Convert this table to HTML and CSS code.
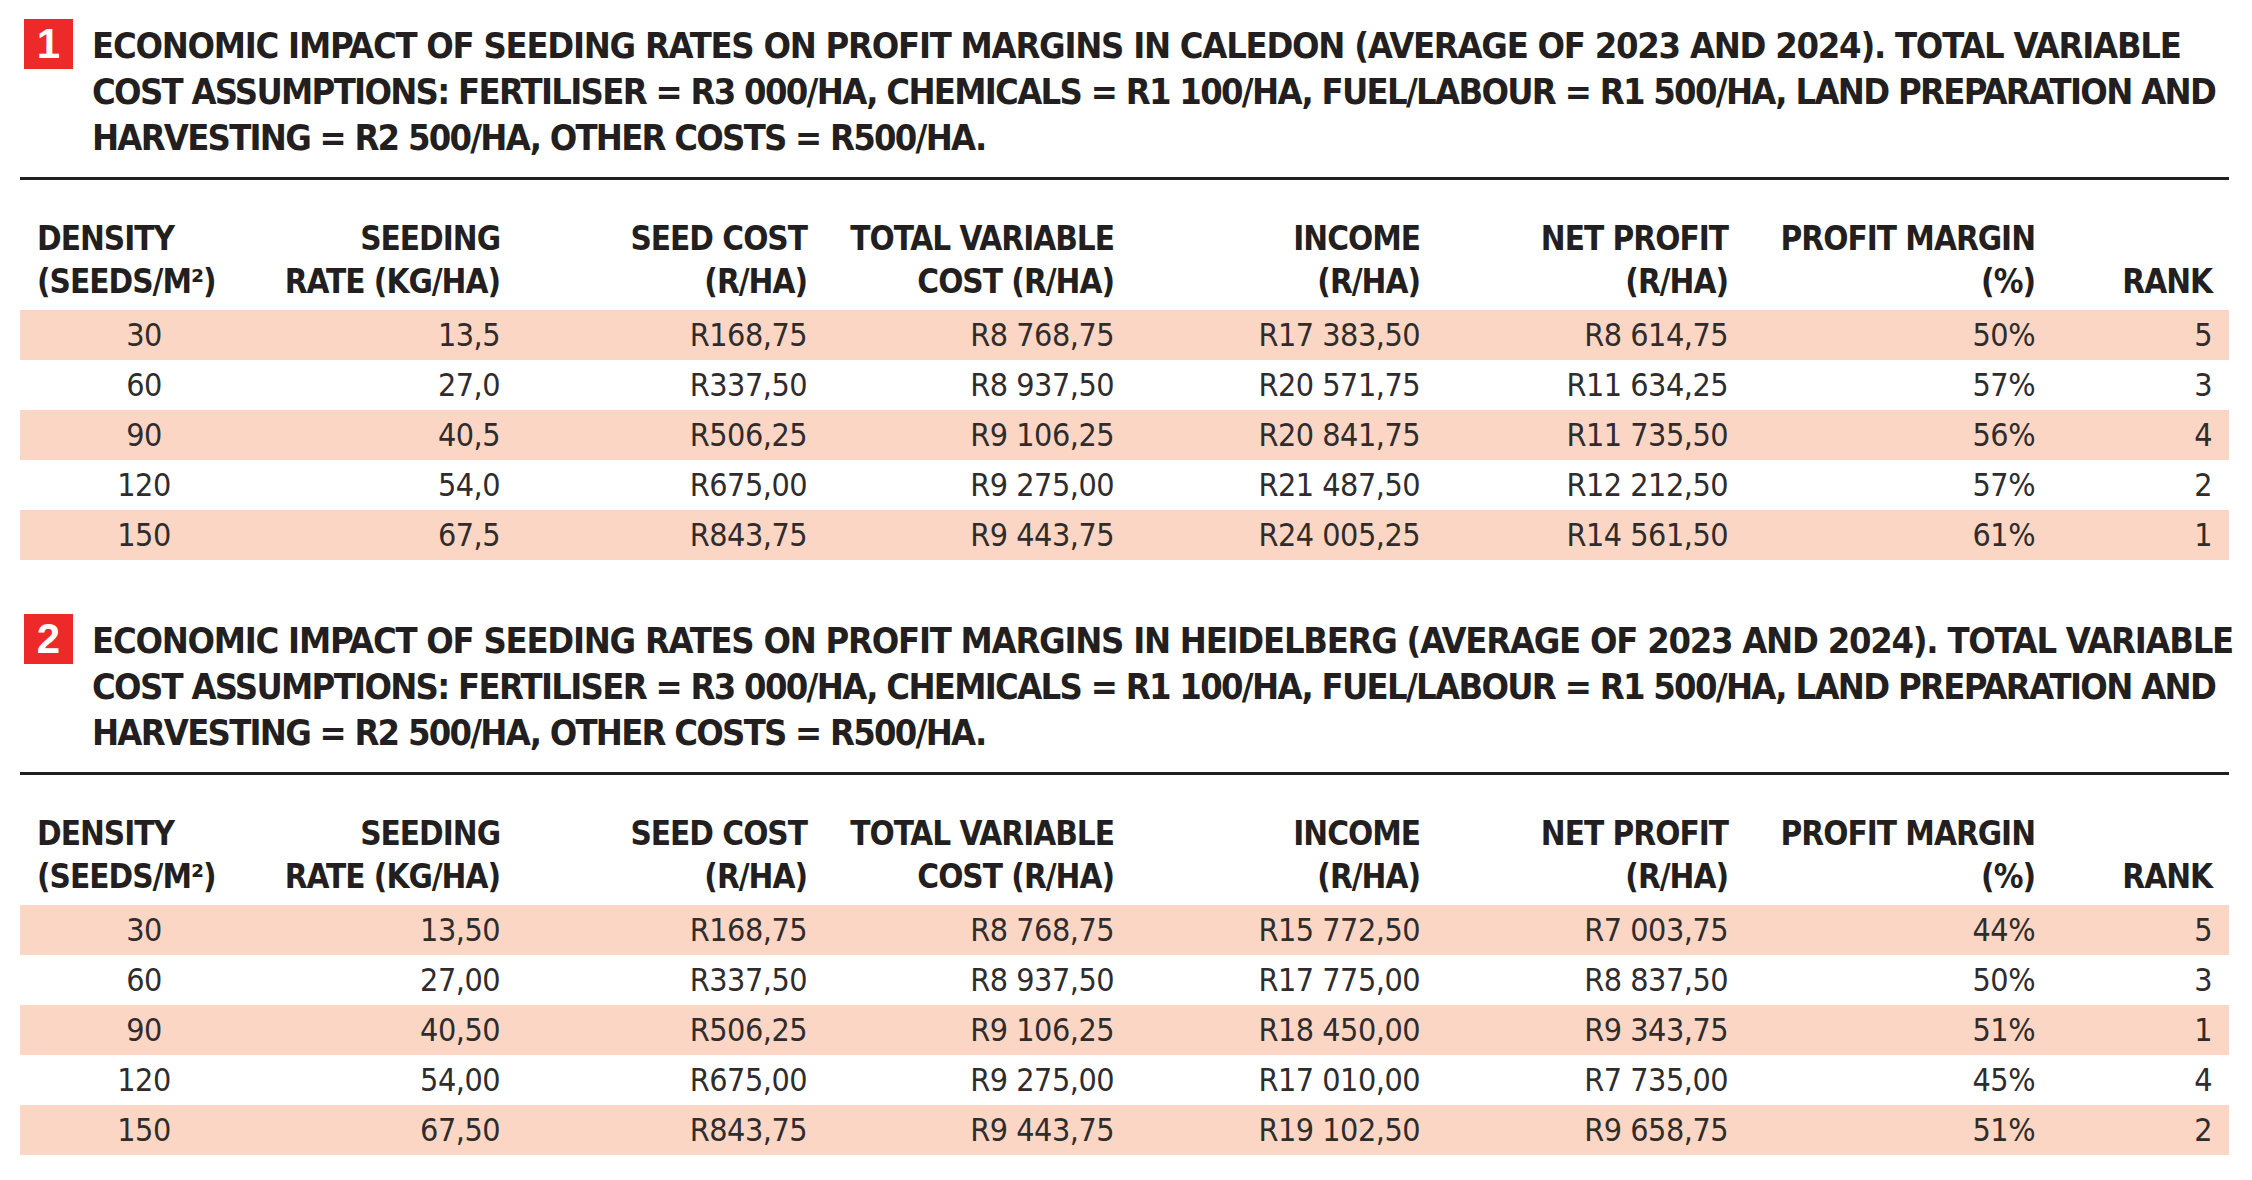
FILE: index.html
```html
<!DOCTYPE html>
<html lang="en">
<head>
<meta charset="utf-8">
<title>Seeding rates – profit margins</title>
<link rel="stylesheet" href="styles.css">
</head>
<body>
<main class="page">
  <section class="block">
    <div class="caption">
      <span class="badge">1</span>
      <h2 class="caption-text">
        <span class="line line-1">ECONOMIC IMPACT OF SEEDING RATES ON PROFIT MARGINS IN CALEDON (AVERAGE OF 2023 AND 2024). TOTAL VARIABLE</span>
        <span class="line line-2">COST ASSUMPTIONS: FERTILISER = R3 000/HA, CHEMICALS = R1 100/HA, FUEL/LABOUR = R1 500/HA, LAND PREPARATION AND</span>
        <span class="line line-3">HARVESTING = R2 500/HA, OTHER COSTS = R500/HA.</span>
      </h2>
    </div>
    <table class="data">
      <colgroup>
        <col class="c1"><col class="c2"><col class="c3"><col class="c4"><col class="c5"><col class="c6"><col class="c7"><col class="c8">
      </colgroup>
      <thead>
        <tr>
          <th class="first">DENSITY<br>(SEEDS/M²)</th>
          <th>SEEDING<br>RATE (KG/HA)</th>
          <th>SEED COST<br>(R/HA)</th>
          <th>TOTAL VARIABLE<br>COST (R/HA)</th>
          <th>INCOME<br>(R/HA)</th>
          <th>NET PROFIT<br>(R/HA)</th>
          <th>PROFIT MARGIN<br>(%)</th>
          <th>RANK</th>
        </tr>
      </thead>
      <tbody>
        <tr><td class="first">30</td><td>13,5</td><td>R168,75</td><td>R8 768,75</td><td>R17 383,50</td><td>R8 614,75</td><td>50%</td><td>5</td></tr>
        <tr><td class="first">60</td><td>27,0</td><td>R337,50</td><td>R8 937,50</td><td>R20 571,75</td><td>R11 634,25</td><td>57%</td><td>3</td></tr>
        <tr><td class="first">90</td><td>40,5</td><td>R506,25</td><td>R9 106,25</td><td>R20 841,75</td><td>R11 735,50</td><td>56%</td><td>4</td></tr>
        <tr><td class="first">120</td><td>54,0</td><td>R675,00</td><td>R9 275,00</td><td>R21 487,50</td><td>R12 212,50</td><td>57%</td><td>2</td></tr>
        <tr><td class="first">150</td><td>67,5</td><td>R843,75</td><td>R9 443,75</td><td>R24 005,25</td><td>R14 561,50</td><td>61%</td><td>1</td></tr>
      </tbody>
    </table>
  </section>

  <section class="block">
    <div class="caption">
      <span class="badge">2</span>
      <h2 class="caption-text">
        <span class="line line-1">ECONOMIC IMPACT OF SEEDING RATES ON PROFIT MARGINS IN HEIDELBERG (AVERAGE OF 2023 AND 2024). TOTAL VARIABLE</span>
        <span class="line line-2">COST ASSUMPTIONS: FERTILISER = R3 000/HA, CHEMICALS = R1 100/HA, FUEL/LABOUR = R1 500/HA, LAND PREPARATION AND</span>
        <span class="line line-3">HARVESTING = R2 500/HA, OTHER COSTS = R500/HA.</span>
      </h2>
    </div>
    <table class="data">
      <colgroup>
        <col class="c1"><col class="c2"><col class="c3"><col class="c4"><col class="c5"><col class="c6"><col class="c7"><col class="c8">
      </colgroup>
      <thead>
        <tr>
          <th class="first">DENSITY<br>(SEEDS/M²)</th>
          <th>SEEDING<br>RATE (KG/HA)</th>
          <th>SEED COST<br>(R/HA)</th>
          <th>TOTAL VARIABLE<br>COST (R/HA)</th>
          <th>INCOME<br>(R/HA)</th>
          <th>NET PROFIT<br>(R/HA)</th>
          <th>PROFIT MARGIN<br>(%)</th>
          <th>RANK</th>
        </tr>
      </thead>
      <tbody>
        <tr><td class="first">30</td><td>13,50</td><td>R168,75</td><td>R8 768,75</td><td>R15 772,50</td><td>R7 003,75</td><td>44%</td><td>5</td></tr>
        <tr><td class="first">60</td><td>27,00</td><td>R337,50</td><td>R8 937,50</td><td>R17 775,00</td><td>R8 837,50</td><td>50%</td><td>3</td></tr>
        <tr><td class="first">90</td><td>40,50</td><td>R506,25</td><td>R9 106,25</td><td>R18 450,00</td><td>R9 343,75</td><td>51%</td><td>1</td></tr>
        <tr><td class="first">120</td><td>54,00</td><td>R675,00</td><td>R9 275,00</td><td>R17 010,00</td><td>R7 735,00</td><td>45%</td><td>4</td></tr>
        <tr><td class="first">150</td><td>67,50</td><td>R843,75</td><td>R9 443,75</td><td>R19 102,50</td><td>R9 658,75</td><td>51%</td><td>2</td></tr>
      </tbody>
    </table>
  </section>
</main>
</body>
</html>
```

FILE: styles.css
```css
html, body {
  margin: 0;
  padding: 0;
  background: #ffffff;
}

body {
  width: 2252px;
  color: #231f20;
  font-family: "DejaVu Sans Condensed", "DejaVu Sans", sans-serif;
}

.page {
  padding: 0 23px 0 20px;
}

.block {
  padding-top: 19px;
}

.block + .block {
  margin-top: 35px;
}

.caption {
  display: flex;
  align-items: flex-start;
  gap: 19px;
  padding-left: 4px;
}

.badge {
  flex: none;
  width: 49px;
  height: 50px;
  background: #ed2a29;
  color: #ffffff;
  font-family: "Liberation Sans", sans-serif;
  font-weight: 700;
  font-size: 42px;
  line-height: 50px;
  text-align: center;
}

.caption-text {
  margin: 4px 0 0 0;
  font-size: 36px;
  font-weight: 700;
  line-height: 46px;
  white-space: nowrap;
  color: #231f20;
}

.line {
  display: block;
}

.line-1 { letter-spacing: -1.25px; }
.line-2 { letter-spacing: -1.7px; }
.line-3 { letter-spacing: -1.75px; }

.data {
  width: 100%;
  margin-top: 16px;
  border-collapse: collapse;
  table-layout: fixed;
  border-top: 3px solid #231f20;
}

.c1 { width: 248px; }
.c2 { width: 249px; }
.c3 { width: 307px; }
.c4 { width: 307px; }
.c5 { width: 306px; }
.c6 { width: 308px; }
.c7 { width: 307px; }
.c8 { width: 177px; }

.data th {
  padding: 37px 17px 7px 0;
  font-size: 33px;
  font-weight: 700;
  letter-spacing: -1px;
  line-height: 43px;
  text-align: right;
  vertical-align: bottom;
  white-space: nowrap;
}

.data th.first {
  text-align: left;
  padding-left: 17px;
  padding-right: 0;
}

.data td {
  height: 50px;
  padding: 0 17px 0 0;
  font-size: 32px;
  font-weight: 400;
  letter-spacing: -0.5px;
  line-height: 50px;
  text-align: right;
  vertical-align: middle;
  white-space: nowrap;
  color: #2f2c2d;
}

.data td.first {
  text-align: center;
  padding: 0;
}

.data tbody tr:nth-child(odd) {
  background: #fcd6c4;
}
```
